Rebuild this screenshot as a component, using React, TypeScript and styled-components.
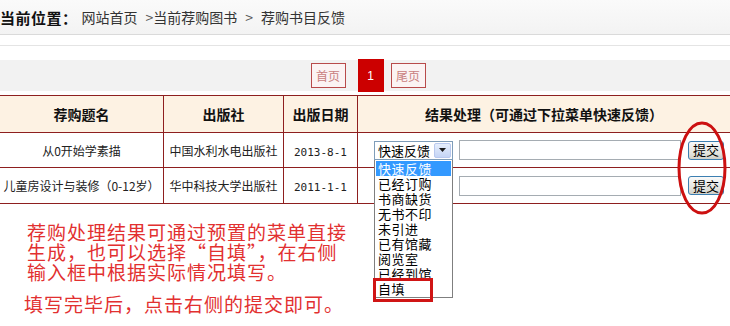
import React from "react";
import styled, { createGlobalStyle } from "styled-components";

const GlobalStyle = createGlobalStyle`
  html, body {
    margin: 0;
    padding: 0;
    background: #ffffff;
  }
  body {
    font-family: "Noto Sans CJK SC", "Liberation Sans", sans-serif;
    color: #000;
    overflow: hidden;
  }
`;

const Page = styled.div`
  position: relative;
  width: 730px;
  height: 326px;
  overflow: hidden;
`;

const Breadcrumb = styled.div`
  display: flex;
  align-items: center;
  height: 34px;
  background: linear-gradient(#fafafa, #f3f3f3);
  border-bottom: 1px solid #dadada;
  font-size: 14px;
  color: #333;
  white-space: nowrap;
`;

const CrumbLabel = styled.span`
  font-weight: bold;
  font-size: 15px;
  letter-spacing: 0.5px;
  color: #111;
  margin-right: 4px;
`;

const CrumbSep = styled.span<{ $before?: number; $after?: number }>`
  margin: 0 ${(p) => p.$after ?? 0}px 0 ${(p) => p.$before ?? 0}px;
  color: #555;
`;

const Divider = styled.div`
  margin-top: 10px;
  border-top: 1px solid #e4e4e4;
`;

const PagerBar = styled.div`
  margin-top: 14px;
  height: 31px;
  background: #f2f2f2;
  display: flex;
  align-items: center;
  justify-content: center;
  padding-left: 6px;
`;

const PageLink = styled.span`
  display: flex;
  align-items: center;
  justify-content: center;
  width: 33px;
  height: 23px;
  border: 1px solid #b84a4a;
  color: #c98080;
  font-size: 12px;
  background: #fbf3f3;
`;

const PageCurrent = styled.span`
  display: flex;
  align-items: center;
  justify-content: center;
  width: 26px;
  height: 33px;
  margin: 0 7px 0 12px;
  background: #cc0000;
  color: #fff;
  font-size: 12px;
  font-family: "Liberation Sans", sans-serif;
`;

const Table = styled.table`
  margin-top: 4px;
  width: 730px;
  border-collapse: collapse;
  table-layout: fixed;
`;

const HeadCell = styled.th<{ $w?: number; $first?: boolean }>`
  width: ${(p) => (p.$w ? `${p.$w}px` : "auto")};
  height: 36px;
  padding: 0;
  background: #fdf2e3;
  border: 1px solid #8e1f1f;
  border-left: ${(p) => (p.$first ? "none" : "1px solid #8e1f1f")};
  border-right: none;
  font-size: 14px;
  font-weight: bold;
  color: #111;
  text-align: center;
  white-space: nowrap;
`;

const Cell = styled.td<{ $first?: boolean; $h: number }>`
  height: ${(p) => p.$h}px;
  padding: 0;
  border: 1px solid #8e1f1f;
  border-left: ${(p) => (p.$first ? "none" : "1px solid #8e1f1f")};
  border-right: none;
  font-size: 12px;
  color: #222;
  text-align: center;
  white-space: nowrap;
  overflow: visible;
  vertical-align: middle;
`;

const DateText = styled.span`
  font-family: "DejaVu Sans Mono", monospace;
  font-size: 11px;
`;

const ActionRow = styled.div`
  display: flex;
  align-items: center;
  padding-left: 16px;
`;

const SelectWrap = styled.div`
  position: relative;
  width: 79px;
  height: 19px;
`;

const SelectBox = styled.div`
  box-sizing: border-box;
  display: flex;
  width: 79px;
  height: 19px;
  border: 1px solid #7f9db9;
  background: #fff;
`;

const SelectValue = styled.span`
  flex: 1;
  font-size: 13px;
  line-height: 17px;
  text-align: left;
  padding-left: 3px;
  color: #000;
`;

const SelectArrow = styled.span`
  width: 15px;
  margin: 1px;
  display: flex;
  align-items: center;
  justify-content: center;
  border: 1px solid #b9c9ef;
  border-radius: 2px;
  background: linear-gradient(#e6eefc, #c5d5f5);
`;

const DropList = styled.ul`
  position: absolute;
  top: 19px;
  left: 0;
  z-index: 5;
  box-sizing: border-box;
  width: 79px;
  height: 138px;
  margin: 0;
  padding: 1px 1px 0;
  list-style: none;
  background: #fff;
  border: 1px solid #7f7f7f;
  border-top: none;
`;

const DropItem = styled.li<{ $active?: boolean }>`
  height: 15px;
  line-height: 15px;
  font-size: 13px;
  letter-spacing: 0.5px;
  text-align: left;
  padding-left: 2px;
  background: ${(p) => (p.$active ? "#3399ff" : "transparent")};
  color: ${(p) => (p.$active ? "#fff" : "#000")};
`;

const Highlight = styled.div`
  position: absolute;
  left: -2px;
  top: 118px;
  width: 54px;
  height: 18px;
  border: 3px solid #d01515;
`;

const TextInput = styled.div`
  box-sizing: border-box;
  width: 222px;
  height: 20px;
  margin-left: 6px;
  border: 1px solid #a5acb2;
  background: #fff;
`;

const SubmitButton = styled.button`
  box-sizing: border-box;
  width: 36px;
  height: 19px;
  margin-left: 7px;
  padding: 0;
  border: 1px solid #3c7fb1;
  border-radius: 3px;
  background: linear-gradient(#fafafa, #e2e2dc 70%, #cfcfc8);
  font-family: "Noto Sans CJK SC", sans-serif;
  font-size: 13px;
  line-height: 16px;
  color: #000;
`;

const Ellipse = styled.svg`
  position: absolute;
  left: 677px;
  top: 121px;
`;

const Note = styled.div`
  margin-top: 18px;
  color: #e23030;
  font-size: 19px;
  letter-spacing: 1px;
  line-height: 20px;
  white-space: nowrap;
`;

const NotePara = styled.p<{ $indent: number; $gap?: number }>`
  margin: ${(p) => p.$gap ?? 0}px 0 0;
  padding-left: ${(p) => p.$indent}px;
`;

const options = [
  "快速反馈",
  "已经订购",
  "书商缺货",
  "无书不印",
  "未引进",
  "已有馆藏",
  "阅览室",
  "已经到馆",
  "自填",
];

const books = [
  { title: "从0开始学素描", press: "中国水利水电出版社", date: "2013-8-1", h: 34 },
  { title: "儿童房设计与装修（0-12岁）", press: "华中科技大学出版社", date: "2011-1-1", h: 35 },
];

const Arrow = () => (
  <svg width="7" height="4" viewBox="0 0 7 4">
    <path d="M0 0 H7 L3.5 4 Z" fill="#1a1a1a" />
  </svg>
);

const App: React.FC = () => {
  return (
    <Page>
      <GlobalStyle />
      <Breadcrumb>
        <CrumbLabel>当前位置：</CrumbLabel>
        <span>网站首页</span>
        <CrumbSep $before={8}>&gt;</CrumbSep>
        <span>当前荐购图书</span>
        <CrumbSep $before={8} $after={8}>&gt;</CrumbSep>
        <span>荐购书目反馈</span>
      </Breadcrumb>
      <Divider />
      <PagerBar>
        <PageLink>首页</PageLink>
        <PageCurrent>1</PageCurrent>
        <PageLink>尾页</PageLink>
      </PagerBar>
      <Table>
        <thead>
          <tr>
            <HeadCell $w={163} $first>荐购题名</HeadCell>
            <HeadCell $w={119}>出版社</HeadCell>
            <HeadCell $w={73}>出版日期</HeadCell>
            <HeadCell>结果处理（可通过下拉菜单快速反馈）</HeadCell>
          </tr>
        </thead>
        <tbody>
          {books.map((b, i) => (
            <tr key={b.title}>
              <Cell $first $h={b.h}>{b.title}</Cell>
              <Cell $h={b.h}>{b.press}</Cell>
              <Cell $h={b.h}>
                <DateText>{b.date}</DateText>
              </Cell>
              <Cell $h={b.h}>
                <ActionRow>
                  <SelectWrap>
                    <SelectBox>
                      <SelectValue>快速反馈</SelectValue>
                      <SelectArrow>
                        <Arrow />
                      </SelectArrow>
                    </SelectBox>
                    {i === 0 && (
                      <DropList>
                        {options.map((o, k) => (
                          <DropItem key={o} $active={k === 0}>
                            {o}
                          </DropItem>
                        ))}
                        <Highlight />
                      </DropList>
                    )}
                  </SelectWrap>
                  <TextInput />
                  <SubmitButton>提交</SubmitButton>
                </ActionRow>
              </Cell>
            </tr>
          ))}
        </tbody>
      </Table>
      <Ellipse width="50" height="94" viewBox="0 0 50 94">
        <ellipse cx="25" cy="47" rx="23" ry="45" fill="none" stroke="#cc1010" strokeWidth="3" />
      </Ellipse>
      <Note>
        <NotePara $indent={27}>
          荐购处理结果可通过预置的菜单直接
          <br />
          生成，也可以选择“自填”，在右侧
          <br />
          输入框中根据实际情况填写。
        </NotePara>
        <NotePara $indent={24} $gap={12}>
          填写完毕后，点击右侧的提交即可。
        </NotePara>
      </Note>
    </Page>
  );
};

export default App;
